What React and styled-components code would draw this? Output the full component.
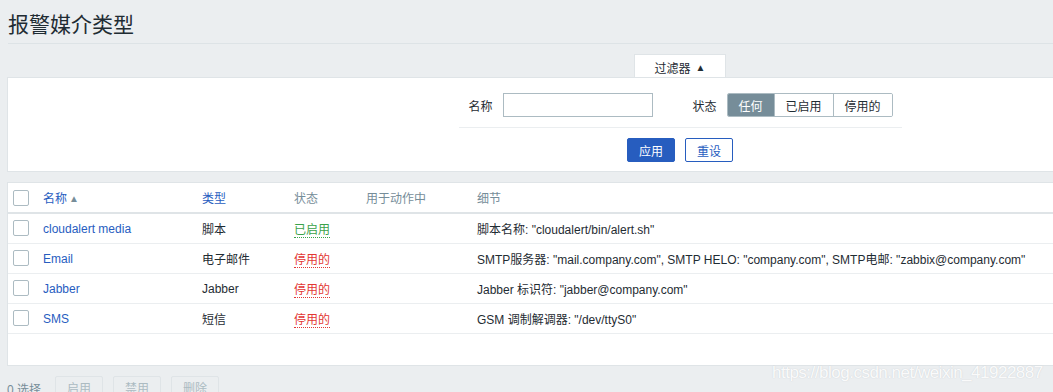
import React from "react";
import styled, { createGlobalStyle } from "styled-components";

const GlobalStyle = createGlobalStyle`
  html, body {
    margin: 0;
    padding: 0;
    background: #ebeef0;
    overflow: hidden;
  }
  body {
    font-family: "Liberation Sans", Arial, "Noto Sans CJK SC", sans-serif;
    font-size: 12px;
    color: #1f2c33;
  }
`;

const rows = [
  { name: "cloudalert media", type: "脚本", on: true, detail: '脚本名称: "cloudalert/bin/alert.sh"' },
  { name: "Email", type: "电子邮件", on: false, detail: 'SMTP服务器: "mail.company.com", SMTP HELO: "company.com", SMTP电邮: "zabbix@company.com"' },
  { name: "Jabber", type: "Jabber", on: false, detail: 'Jabber 标识符: "jabber@company.com"' },
  { name: "SMS", type: "短信", on: false, detail: 'GSM 调制解调器: "/dev/ttyS0"' },
];

const columns = [29, 159, 92, 72, 111];

function App() {
  return (
    <>
      <GlobalStyle />
      <Page>
        <Header>
          <h1>报警媒介类型</h1>
        </Header>

        <FilterTabs>
          <Tab>
            过滤器 <Arrow>▲</Arrow>
          </Tab>
        </FilterTabs>
        <FilterPanel>
          <FilterForm>
            <FieldRow>
              <Label>名称</Label>
              <TextInput type="text" />
              <Label $wide>状态</Label>
              <Segmented>
                <Segment $active>任何</Segment>
                <Segment>已启用</Segment>
                <Segment>停用的</Segment>
              </Segmented>
            </FieldRow>
            <ButtonRow>
              <Button $primary>应用</Button>
              <Button>重设</Button>
            </ButtonRow>
          </FilterForm>
        </FilterPanel>

        <TablePanel>
          <Table>
            <colgroup>
              {columns.map((w, i) => (
                <col key={i} style={{ width: w }} />
              ))}
              <col />
            </colgroup>
            <thead>
              <tr>
                <CheckCell as="th" $head><Checkbox /></CheckCell>
                <Th><SortLink>名称<SortArrow>▲</SortArrow></SortLink></Th>
                <Th><SortLink>类型</SortLink></Th>
                <Th>状态</Th>
                <Th>用于动作中</Th>
                <Th>细节</Th>
              </tr>
            </thead>
            <tbody>
              {rows.map((r) => (
                <tr key={r.name}>
                  <CheckCell><Checkbox /></CheckCell>
                  <Td><NameLink>{r.name}</NameLink></Td>
                  <Td>{r.type}</Td>
                  <Td><Status $on={r.on}>{r.on ? "已启用" : "停用的"}</Status></Td>
                  <Td></Td>
                  <Td>{r.detail}</Td>
                </tr>
              ))}
            </tbody>
          </Table>
          <TableSpacer />
        </TablePanel>

        <Footer>
          <Selected>0 选择</Selected>
          <GhostButton>启用</GhostButton>
          <GhostButton>禁用</GhostButton>
          <GhostButton>删除</GhostButton>
        </Footer>
      </Page>
      <Watermark>https://blog.csdn.net/weixin_41922887</Watermark>
    </>
  );
}

export default App;

const Page = styled.div`
  width: 1346px;
  padding-left: 7px;
`;

const Header = styled.div`
  height: 43px;
  margin-left: 1px;
  border-bottom: 1px solid #dde3e6;
  display: flex;
  align-items: center;

  h1 {
    margin: 0;
    font-size: 21px;
    font-weight: normal;
    color: #1f2c33;
    padding-top: 2px;
  }
`;

const FilterTabs = styled.div`
  display: flex;
  justify-content: center;
  margin-top: 10px;
`;

const Tab = styled.div`
  width: 92px;
  height: 23px;
  box-sizing: border-box;
  background: #fff;
  border: 1px solid #dfe4e7;
  border-bottom: 0;
  display: flex;
  align-items: center;
  justify-content: center;
  gap: 5px;
  padding-top: 3px;
  color: #1f2c33;
`;

const Arrow = styled.span`
  font-size: 10px;
`;

const FilterPanel = styled.div`
  background: #fff;
  border: 1px solid #dfe4e7;
  padding: 15px 0 9px;
  display: flex;
  justify-content: center;
`;

const FilterForm = styled.div`
  width: 443px;
  display: flex;
  flex-direction: column;
  align-items: center;
`;

const FieldRow = styled.div`
  width: 100%;
  display: flex;
  align-items: center;
  padding-bottom: 10px;
  border-bottom: 1px solid #ebeef0;
`;

const Label = styled.span`
  margin-left: ${(p) => (p.$wide ? "40px" : "10px")};
  margin-right: 10px;
  color: #1f2c33;
`;

const TextInput = styled.input`
  width: 150px;
  height: 24px;
  box-sizing: border-box;
  border: 1px solid #acbbc2;
  margin: 0;
  padding: 0 5px;
  background: #fff;
`;

const Segmented = styled.div`
  display: flex;
  border: 1px solid #acbbc2;
  border-radius: 2px;
  overflow: hidden;
  height: 24px;
  box-sizing: border-box;
`;

const Segment = styled.div`
  padding: 0 11px;
  display: flex;
  align-items: center;
  background: ${(p) => (p.$active ? "#768d99" : "#fff")};
  color: ${(p) => (p.$active ? "#fff" : "#1f2c33")};
  & + & {
    border-left: 1px solid #acbbc2;
  }
`;

const ButtonRow = styled.div`
  display: flex;
  gap: 10px;
  margin-top: 10px;
`;

const Button = styled.button`
  width: 48px;
  height: 24px;
  box-sizing: border-box;
  border-radius: 2px;
  font: inherit;
  border: 1px solid #275dbf;
  background: ${(p) => (p.$primary ? "#275dbf" : "#fff")};
  color: ${(p) => (p.$primary ? "#fff" : "#275dbf")};
  padding: 0;
`;

const TablePanel = styled.div`
  margin-top: 10px;
  background: #fff;
  border: 1px solid #dfe4e7;
`;

const Table = styled.table`
  width: 100%;
  border-collapse: collapse;
  table-layout: fixed;

  thead tr {
    height: 30px;
  }

  tbody tr {
    height: 30px;
    border-bottom: 1px solid #ebeef0;
  }
`;

const TableSpacer = styled.div`
  height: 31px;
`;

const Th = styled.th`
  text-align: left;
  font-weight: normal;
  color: #768d99;
  padding: 0 6px;
  border-bottom: 2px solid #dfe4e7;
`;

const Td = styled.td`
  padding: 1px 6px 0;
  white-space: nowrap;
`;

const CheckCell = styled.td`
  padding: 0 0 0 5px;
  border-bottom: ${(p) => (p.$head ? "2px solid #dfe4e7" : "0")};
  vertical-align: middle;
  line-height: 0;
  text-align: left;
`;

const Checkbox = styled.span`
  display: inline-block;
  width: 16px;
  height: 16px;
  box-sizing: border-box;
  border: 1px solid #acbbc2;
  border-radius: 2px;
  background: #fff;
`;

const SortLink = styled.span`
  color: #275dbf;
`;

const SortArrow = styled.span`
  font-size: 10px;
  color: #768d99;
  margin-left: 2px;
  vertical-align: 1px;
`;

const NameLink = styled.span`
  color: #275dbf;
`;

const Status = styled.span`
  color: ${(p) => (p.$on ? "#3aa24a" : "#e33734")};
  border-bottom: 1px dotted ${(p) => (p.$on ? "#3aa24a" : "#e33734")};
`;

const Footer = styled.div`
  display: flex;
  align-items: flex-start;
  gap: 10px;
  margin-top: 10px;
`;

const Selected = styled.span`
  color: #768d99;
  margin-top: 4px;
  margin-right: 4px;
`;

const GhostButton = styled.button`
  width: 48px;
  height: 24px;
  box-sizing: border-box;
  border: 1px solid #dfe4e7;
  border-radius: 2px;
  background: #ebeef0;
  color: #acbbc2;
  font: inherit;
  padding: 0;
`;

const Watermark = styled.div`
  position: absolute;
  left: 772px;
  top: 363px;
  font-family: "Liberation Sans", Arial, sans-serif;
  font-size: 17px;
  letter-spacing: -0.5px;
  color: rgba(255, 255, 255, 0.92);
  text-shadow: 0 0 1px rgba(160, 170, 175, 0.5);
  pointer-events: none;
`;
